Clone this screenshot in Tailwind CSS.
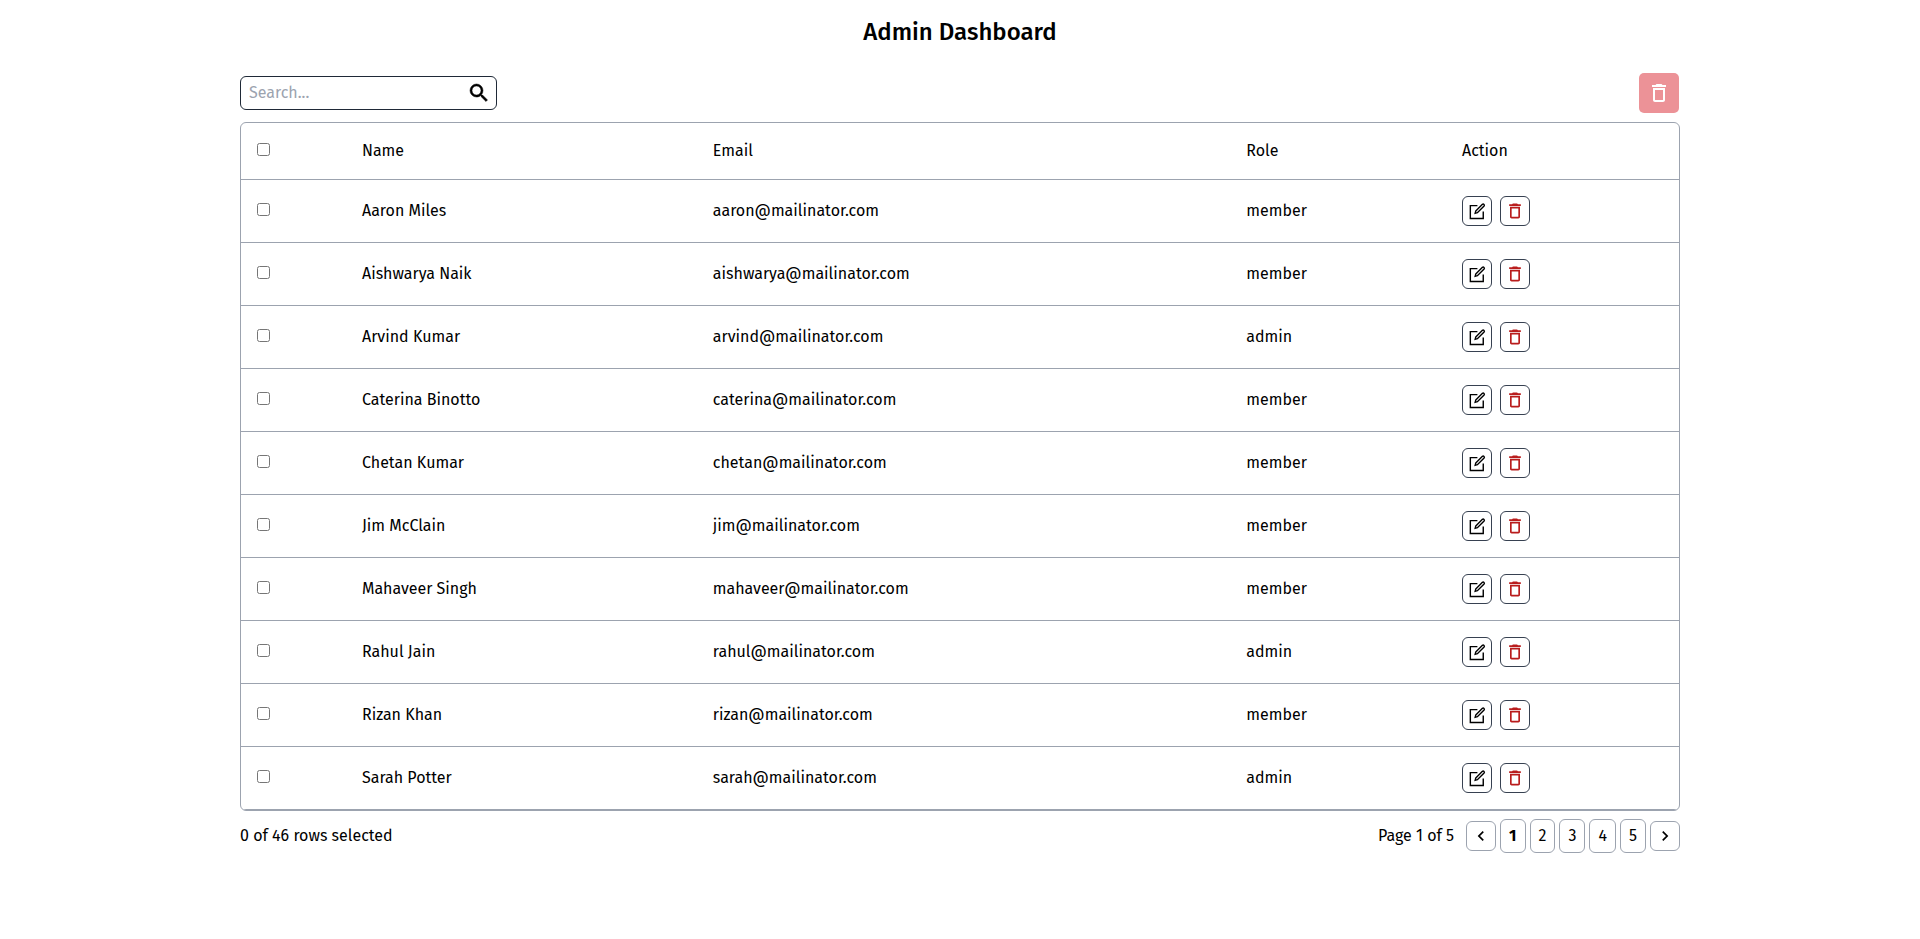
<!DOCTYPE html>
<html lang="en">
<head>
<meta charset="utf-8">
<meta name="viewport" content="width=device-width, initial-scale=1">
<title>Admin Dashboard</title>
<script src="https://cdn.jsdelivr.net/npm/@tailwindcss/browser@4"></script>
</head>
<body class="min-h-screen bg-white font-['Fira_Sans','Noto_Sans',sans-serif] text-base text-black">
<svg class="hidden" aria-hidden="true">
  <symbol id="trash" viewBox="0 0 24 24"><path d="M6 19c0 1.1.9 2 2 2h8c1.1 0 2-.9 2-2V7H6v12zM8 9h8v10H8V9zm7.5-5l-1-1h-5l-1 1H5v2h14V4h-3.5z"/></symbol>
  <symbol id="edit" viewBox="0 0 24 24"><path fill="none" stroke="currentColor" stroke-width="1.700" d="M12.500 5.500H4v15.500h15.500v-8.500M10.500 12 18.500 4q1-.8 1.900.1t.1 1.900L12.500 14l-2.700.7z"/></symbol>
</svg>
<main class="mx-auto flex w-3/4 flex-col">
  <h1 class="py-4 text-center text-2xl font-medium">Admin Dashboard</h1>
  <div class="mt-2 flex items-center justify-between pt-px pr-px">
    <label class="flex w-[257px] items-center rounded-md border border-[#1f2937] py-1 pr-[5px] pl-2">
      <input type="text" aria-label="Search" placeholder="Search..." class="min-w-0 flex-1 outline-none placeholder:text-[#9ca3af]">
      <svg viewBox="0 0 24 24" class="size-6 fill-current stroke-current stroke-[0.5]"><path d="M15.500 14h-.79l-.28-.27A6.471 6.471 0 0 0 16 9.500 6.500 6.500 0 1 0 9.500 16c1.610 0 3.090-.59 4.230-1.570l.27.28v.79l5 4.990L20.490 19l-4.990-5zm-6 0C7.010 14 5 11.990 5 9.500S7.010 5 9.500 5 14 7.010 14 9.500 11.990 14 9.500 14z"/></svg>
    </label>
    <button type="button" aria-label="Delete selected" class="flex size-10 items-center justify-center rounded-[5px] bg-[#ec9297] text-white"><svg class="size-6 fill-current"><use href="#trash"/></svg></button>
  </div>
  <div class="mt-[9px] overflow-hidden rounded-md border border-[#9ca3af]">
    <table class="w-full table-fixed text-left">
      <colgroup><col class="w-[7.3%]"><col class="w-[24.4%]"><col class="w-[37.1%]"><col class="w-[15%]"><col></colgroup>
      <thead>
        <tr class="border-b border-[#9ca3af]">
          <th class="p-4"><input type="checkbox" aria-label="Select all" class="mb-1 block size-[13px]"></th>
          <th class="p-4 font-normal">Name</th><th class="p-4 font-normal">Email</th><th class="p-4 font-normal">Role</th><th class="p-4 font-normal">Action</th>
        </tr>
      </thead>
      <tbody id="rows"></tbody>
    </table>
  </div>
  <div class="mt-2 flex items-center justify-between">
    <p>0 of 46 rows selected</p>
    <nav class="flex items-center gap-1" aria-label="Pagination">
      <span class="mr-2">Page 1 of 5</span>
      <button type="button" aria-label="Previous page" class="flex size-[30px] items-center justify-center rounded-md border border-[#9ca3af]"><svg viewBox="0 0 24 24" class="size-5 fill-current"><path d="M15.410 7.410 14 6l-6 6 6 6 1.410-1.410L10.830 12z"/></svg></button>
      <button type="button" aria-current="page" class="rounded-md border border-[#9ca3af] px-2 py-1 font-bold">1</button>
      <button type="button" class="rounded-md border border-[#9ca3af] px-2 py-1">2</button>
      <button type="button" class="rounded-md border border-[#9ca3af] px-2 py-1">3</button>
      <button type="button" class="rounded-md border border-[#9ca3af] px-2 py-1">4</button>
      <button type="button" class="rounded-md border border-[#9ca3af] px-2 py-1">5</button>
      <button type="button" aria-label="Next page" class="flex size-[30px] items-center justify-center rounded-md border border-[#9ca3af]"><svg viewBox="0 0 24 24" class="size-5 fill-current"><path d="M10 6 8.590 7.410 13.170 12l-4.580 4.590L10 18l6-6z"/></svg></button>
    </nav>
  </div>
</main>
<script>
const users = [
  ["Aaron Miles", "aaron", "member"], ["Aishwarya Naik", "aishwarya", "member"],
  ["Arvind Kumar", "arvind", "admin"], ["Caterina Binotto", "caterina", "member"],
  ["Chetan Kumar", "chetan", "member"], ["Jim McClain", "jim", "member"],
  ["Mahaveer Singh", "mahaveer", "member"], ["Rahul Jain", "rahul", "admin"],
  ["Rizan Khan", "rizan", "member"], ["Sarah Potter", "sarah", "admin"]
];
document.getElementById("rows").innerHTML = users.map(([name, mail, role]) => `
  <tr class="border-b border-[#9ca3af]">
    <td class="px-4"><input type="checkbox" aria-label="Select ${name}" class="mb-1 block size-[13px]"></td>
    <td class="px-4">${name}</td><td class="px-4">${mail}@mailinator.com</td><td class="px-4">${role}</td>
    <td class="p-4"><div class="flex gap-2">
      <button type="button" aria-label="Edit ${name}" class="flex size-[30px] items-center justify-center rounded-md border border-[#374151]"><svg class="size-5"><use href="#edit"/></svg></button>
      <button type="button" aria-label="Delete ${name}" class="flex size-[30px] items-center justify-center rounded-md border border-[#374151] text-[#b91c1c]"><svg class="size-5 fill-current"><use href="#trash"/></svg></button>
    </div></td>
  </tr>`).join("");
</script>
</body>
</html>
